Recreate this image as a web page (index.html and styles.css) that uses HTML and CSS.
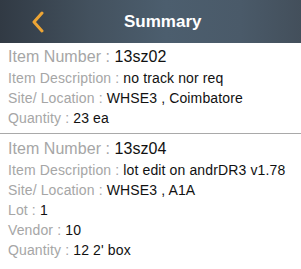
FILE: index.html
```html
<!DOCTYPE html>
<html>
<head>
<meta charset="utf-8">
<link rel="stylesheet" href="styles.css">
</head>
<body>
<div class="screen">
  <header class="navbar">
    <span class="back">
      <svg width="14" height="22" viewBox="0 0 14 22"><path d="M11 2 L3 11 L11 20" fill="none" stroke="#eda535" stroke-width="3" stroke-linecap="round" stroke-linejoin="round"/></svg>
    </span>
    <span class="title">Summary</span>
  </header>
  <section class="item">
    <div class="row main"><span class="label">Item Number : </span><span class="value">13sz02</span></div>
    <div class="row"><span class="label">Item Description : </span><span class="value">no track nor req</span></div>
    <div class="row"><span class="label">Site/ Location : </span><span class="value">WHSE3 , Coimbatore</span></div>
    <div class="row"><span class="label">Quantity : </span><span class="value">23 ea</span></div>
  </section>
  <section class="item">
    <div class="row main"><span class="label">Item Number : </span><span class="value">13sz04</span></div>
    <div class="row"><span class="label">Item Description : </span><span class="value">lot edit on andrDR3 v1.78</span></div>
    <div class="row"><span class="label">Site/ Location : </span><span class="value">WHSE3 , A1A</span></div>
    <div class="row"><span class="label">Lot : </span><span class="value">1</span></div>
    <div class="row"><span class="label">Vendor : </span><span class="value">10</span></div>
    <div class="row"><span class="label">Quantity : </span><span class="value">12 2' box</span></div>
  </section>
</div>
</body>
</html>
```
FILE: styles.css
```css
html, body {
  margin: 0;
  padding: 0;
  background: #ffffff;
}
body {
  font-family: "Liberation Sans", Arial, sans-serif;
}
.screen {
  width: 301px;
  height: 269px;
  overflow: hidden;
  background: #fff;
}
.navbar {
  height: 43px;
  display: flex;
  align-items: center;
  background: linear-gradient(to right, #313a44 0%, #43515e 30%, #4c5e6e 55%, #4a5a69 80%, #434f5b 100%);
}
.back {
  display: flex;
  width: 31px;
  padding-left: 31px;
}
.title {
  color: #ffffff;
  font-size: 17px;
  font-weight: bold;
  margin-left: 62px;
}
.item {
  padding: 3px 8px 5px;
}
.item + .item {
  border-top: 1px solid #a9a9a9;
  padding-top: 4px;
}
.row {
  height: 20px;
  line-height: 20px;
  font-size: 14px;
  letter-spacing: 0.13px;
  white-space: nowrap;
}
.row.main {
  height: 22px;
  line-height: 22px;
  font-size: 16px;
  letter-spacing: 0.05px;
}
.label {
  color: #a6a6a6;
}
.value {
  color: #111111;
}
```
